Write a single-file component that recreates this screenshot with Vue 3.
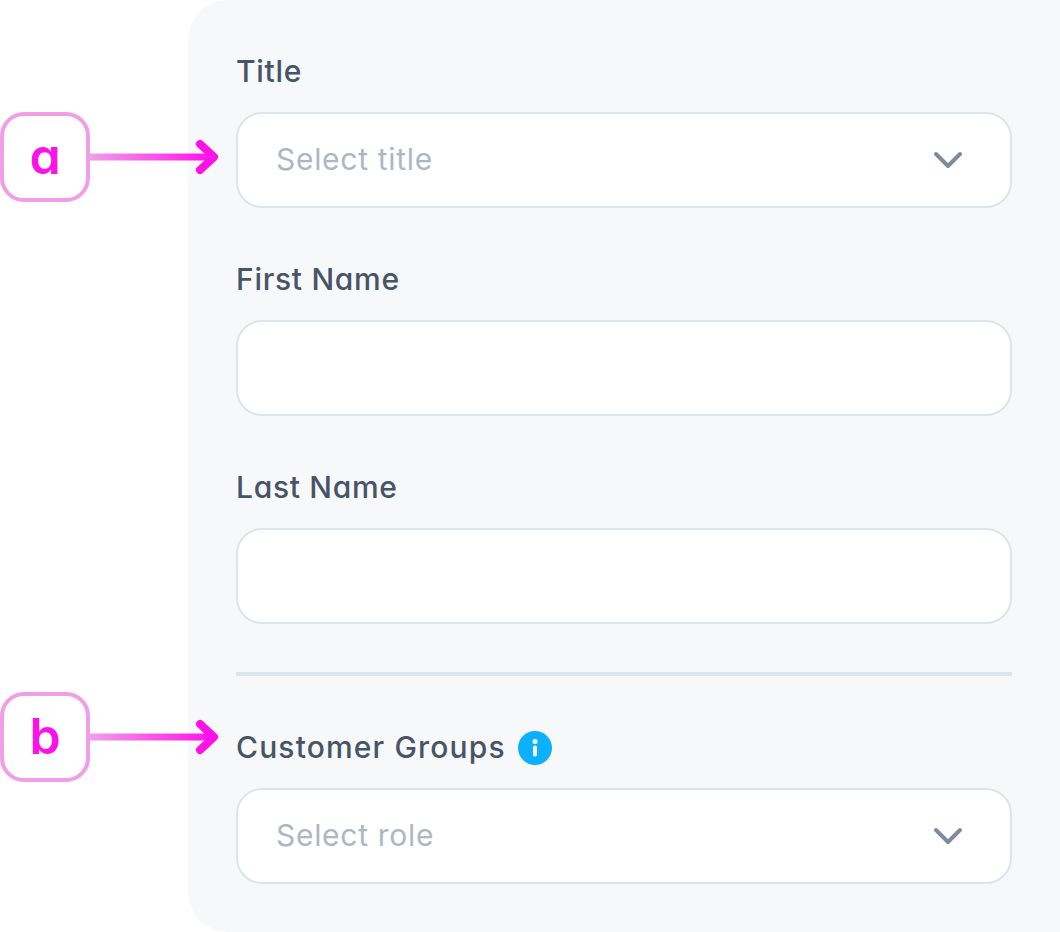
<script setup>
const fields = [
  { key: 'title', label: 'Title', placeholder: 'Select title', select: true },
  { key: 'first', label: 'First Name' },
  { key: 'last', label: 'Last Name' }
]

const callouts = [
  { key: 'a', top: 112 },
  { key: 'b', top: 692 }
]
</script>

<template>
  <div class="page">
    <div class="panel">
      <div class="field" v-for="field in fields" :key="field.key">
        <div class="label">{{ field.label }}</div>
        <div class="control">
          <span class="placeholder" v-if="field.placeholder">{{ field.placeholder }}</span>
          <svg v-if="field.select" class="chevron" width="32" height="20" viewBox="0 0 32 20">
            <path d="M4 4 L16 16 L28 4" fill="none" stroke="#7d8c9c" stroke-width="4" stroke-linecap="round" stroke-linejoin="round" />
          </svg>
        </div>
      </div>

      <div class="divider"></div>

      <div class="field last">
        <div class="label">
          <span class="long">Customer Groups</span>
          <svg class="info" width="34" height="34" viewBox="0 0 34 34">
            <circle cx="17" cy="17" r="17" fill="#0bb0ff" />
            <circle cx="17" cy="10.4" r="2.5" fill="#fff" />
            <path d="M17 16.5 V23.5" stroke="#fff" stroke-width="4" stroke-linecap="round" />
          </svg>
        </div>
        <div class="control">
          <span class="placeholder">Select role</span>
          <svg class="chevron" width="32" height="20" viewBox="0 0 32 20">
            <path d="M4 4 L16 16 L28 4" fill="none" stroke="#7d8c9c" stroke-width="4" stroke-linecap="round" stroke-linejoin="round" />
          </svg>
        </div>
      </div>
    </div>

    <div class="callout" v-for="c in callouts" :key="c.key" :style="{ top: c.top + 'px' }">
      <div class="badge">{{ c.key }}</div>
      <svg class="arrow" width="130" height="40" viewBox="0 0 130 40">
        <defs>
          <linearGradient :id="'line-' + c.key" x1="0" y1="0" x2="1" y2="0">
            <stop offset="0" stop-color="#f09ee8" />
            <stop offset="1" stop-color="#ff12e8" />
          </linearGradient>
        </defs>
        <rect x="0" y="16.5" width="122" height="7" :fill="'url(#line-' + c.key + ')'" />
        <path d="M110 7 L124 20 L110 33" fill="none" stroke="#ff12e8" stroke-width="8" stroke-linecap="round" stroke-linejoin="round" />
      </svg>
    </div>
  </div>
</template>

<style>
body {
  background: #fff;
}
</style>

<style scoped>
.page {
  position: relative;
  width: 1060px;
  height: 932px;
  padding-left: 188px;
  box-sizing: border-box;
  overflow: hidden;
  font-family: Inter, "Noto Sans", sans-serif;
  font-feature-settings: "cv11";
}

.panel {
  height: 932px;
  box-sizing: border-box;
  padding: 48px 48px 0;
  background: #f7f8fa;
  border-radius: 40px 0 0 40px;
}

.field {
  margin-bottom: 48px;
}

.field.last {
  margin-bottom: 0;
}

.label {
  display: flex;
  align-items: center;
  gap: 12px;
  height: 48px;
  margin-bottom: 16px;
  padding-bottom: 2px;
  box-sizing: border-box;
  font-size: 30px;
  font-weight: 500;
  letter-spacing: 0.7px;
  color: #475467;
}

.label .long {
  letter-spacing: 1.15px;
}

.label .info {
  margin-bottom: -2px;
}

.control {
  display: flex;
  align-items: center;
  justify-content: space-between;
  height: 96px;
  box-sizing: border-box;
  padding: 0 46px 0 38px;
  background: #fff;
  border: 2px solid #dce4ec;
  border-radius: 26px;
}

.placeholder {
  font-size: 30px;
  letter-spacing: 0.7px;
  color: #abb8c3;
  padding-bottom: 2px;
}

.divider {
  height: 4px;
  background: #dce4ec;
  margin-bottom: 48px;
}

.callout {
  position: absolute;
  left: 0;
  display: flex;
  align-items: center;
}

.badge {
  width: 90px;
  height: 90px;
  box-sizing: border-box;
  display: flex;
  align-items: center;
  justify-content: center;
  background: #fff;
  border: 4px solid #f09ee8;
  border-radius: 24px;
  font-size: 50px;
  font-weight: 600;
  color: #ff12e8;
  padding-bottom: 2px;
}

.arrow {
  display: block;
}
</style>
